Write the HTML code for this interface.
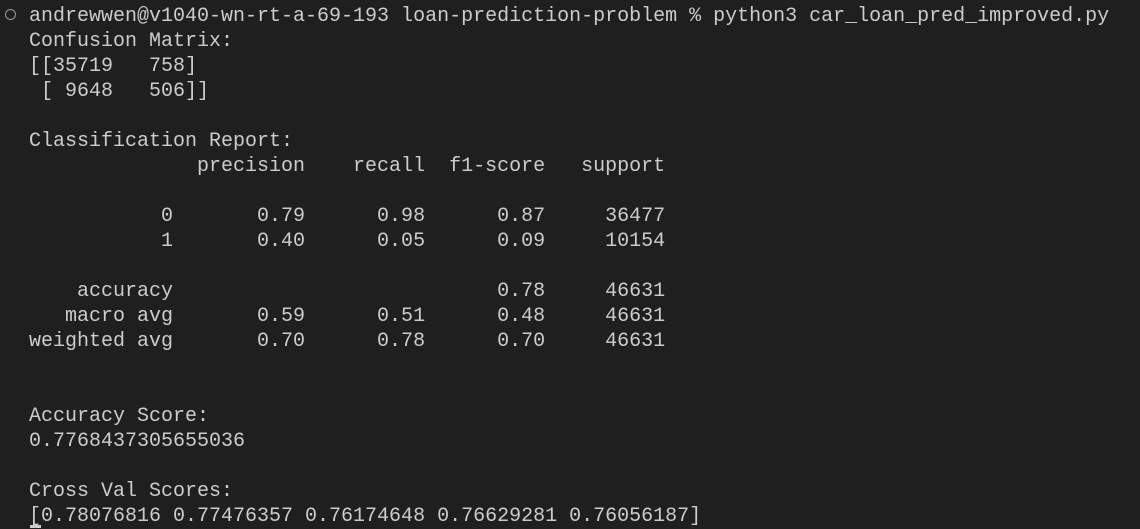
<!DOCTYPE html>
<html><head><style>
html,body{margin:0;padding:0;background:#1f1f1f;width:1140px;height:528px;overflow:hidden}
pre{position:absolute;left:29px;top:4px;margin:0;font-family:"Liberation Mono",monospace;font-size:20px;line-height:25px;color:#cccccc;white-space:pre}
.c{position:absolute;left:5px;top:9px;width:9px;height:9px;border:1.5px solid #9a9a9a;border-radius:50%}
.cur{position:absolute;left:30px;top:525px;width:11px;height:3px;background:#cccccc}
</style></head><body>
<div class="c"></div>
<pre>andrewwen@v1040-wn-rt-a-69-193 loan-prediction-problem % python3 car_loan_pred_improved.py
Confusion Matrix:
[[35719   758]
 [ 9648   506]]

Classification Report:
              precision    recall  f1-score   support

           0       0.79      0.98      0.87     36477
           1       0.40      0.05      0.09     10154

    accuracy                           0.78     46631
   macro avg       0.59      0.51      0.48     46631
weighted avg       0.70      0.78      0.70     46631


Accuracy Score:
0.7768437305655036

Cross Val Scores:
[0.78076816 0.77476357 0.76174648 0.76629281 0.76056187]</pre>
<div class="cur"></div>
</body></html>
